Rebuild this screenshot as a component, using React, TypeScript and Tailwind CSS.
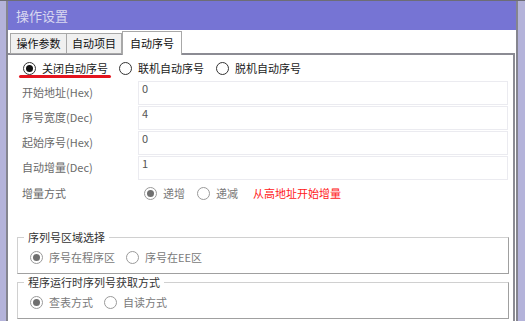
import React from 'react';

const font = { fontFamily: '"Noto Sans CJK SC", "Noto Sans", sans-serif' };

const Radio = ({ checked, enabled = false, label, className = '' }: { checked?: boolean; enabled?: boolean; label: string; className?: string }) => (
  <div className={`flex items-center ${className}`}>
    <span
      className={`w-[13px] h-[13px] rounded-full border flex items-center justify-center bg-white ${
        enabled ? 'border-[#333]' : 'border-[#9a9a9a]'
      }`}
    >
      {checked && <span className={`w-[7px] h-[7px] rounded-full ${enabled ? 'bg-[#111]' : 'bg-[#707070]'}`} />}
    </span>
    <span className={`ml-[6px] leading-none ${enabled ? 'text-[#1a1a1a]' : 'text-[#7a7a7a]'}`}>{label}</span>
  </div>
);

const Field = ({ label, value }: { label: string; value: string }) => (
  <div className="flex h-[25px]">
    <div className="w-[130px] pl-[14px] pt-[4px] text-[#6a6a6a]">{label}</div>
    <div className="w-[370px] mt-[1px] h-[24px] border border-[#ebebf0] px-[3px] text-[#555] leading-[12px]">{value}</div>
  </div>
);

const Group = ({ title, children }: { title: string; children: React.ReactNode }) => (
  <div className="relative ml-[9px] w-[492px] h-[37px] border border-[#d0d0d0] border-r-[#a0a0a0] border-b-[#a0a0a0] flex items-center pl-[12px] pt-[3px]">
    <span className="absolute -top-[9px] left-[6px] bg-white px-[4px] text-[#333] leading-[16px]">{title}</span>
    {children}
  </div>
);

export default function App() {
  return (
    <div className="w-[525px] h-[321px] overflow-hidden bg-[#b4b3da] border-t border-[#6d6d76] text-[11px]" style={font}>
      <div className="ml-[6px] mr-[7px] h-full border-x-2 border-[#85858f] bg-white flex flex-col">
        <div className="h-[29px] shrink-0 bg-[#7674d4] pl-[8px] flex items-center text-[13px] text-[#d9d8f0]">操作设置</div>
        <div className="h-[23px] shrink-0 flex items-end pl-[2px] relative z-10">
          <div className="h-[21px] w-[57px] border border-[#a8a8a8] bg-[#f0f0f0] flex items-center justify-center mb-[-1px] text-[#111]">操作参数</div>
          <div className="h-[21px] w-[55px] border border-l-0 border-[#a8a8a8] bg-[#f0f0f0] flex items-center justify-center mb-[-1px] text-[#111]">自动项目</div>
          <div className="h-[24px] w-[60px] border border-b-0 border-[#a8a8a8] bg-white flex items-center justify-center mb-[-2px] text-[#111]">自动序号</div>
        </div>
        <div className="flex-1 border-t-2 border-r-2 border-[#8b8b93] mr-[1px]">
          <div className="relative h-[25px] flex items-center pl-[15px] pt-[2px]">
            <Radio enabled checked label="关闭自动序号" />
            <Radio enabled label="联机自动序号" className="ml-[11px]" />
            <Radio enabled label="脱机自动序号" className="ml-[12px]" />
            <span className="absolute left-[11px] top-[20px] w-[92px] h-[3px] rounded-full bg-[#e4141e]" />
          </div>
          <Field label="开始地址(Hex)" value="0" />
          <Field label="序号宽度(Dec)" value="4" />
          <Field label="起始序号(Hex)" value="0" />
          <Field label="自动增量(Dec)" value="1" />
          <div className="h-[26px] flex items-center">
            <div className="w-[136px] pl-[14px] text-[#6a6a6a]">增量方式</div>
            <Radio checked label="递增" />
            <Radio label="递减" className="ml-[12px]" />
            <span className="ml-[15px] text-[#ff2020]">从高地址开始增量</span>
          </div>
          <div className="h-[31px]" />
          <Group title="序列号区域选择">
            <Radio checked label="序号在程序区" />
            <Radio label="序号在EE区" className="ml-[11px]" />
          </Group>
          <div className="h-[8px]" />
          <Group title="程序运行时序列号获取方式">
            <Radio checked label="查表方式" />
            <Radio label="自读方式" className="ml-[11px]" />
          </Group>
        </div>
      </div>
    </div>
  );
}
